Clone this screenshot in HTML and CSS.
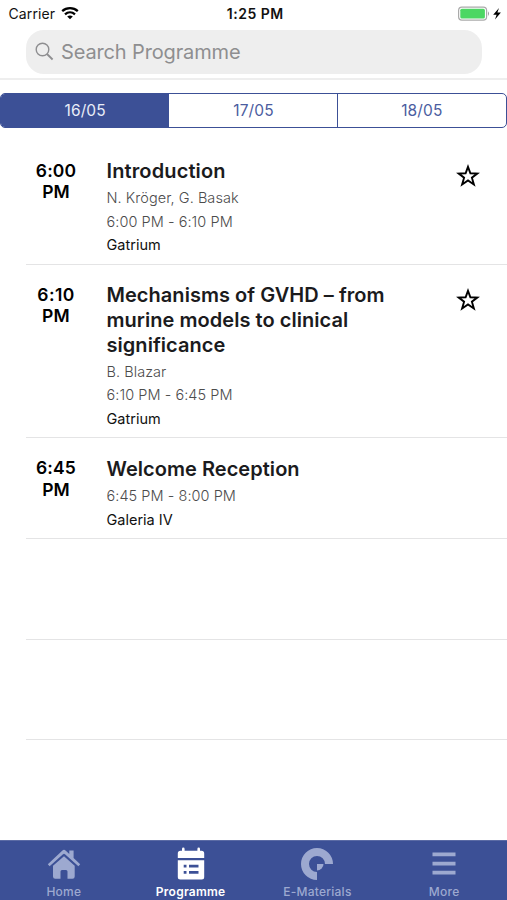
FILE: index.html
```html
<!DOCTYPE html>
<html lang="en">
<head>
<meta charset="utf-8">
<title>Programme</title>
<link rel="stylesheet" href="styles.css">
</head>
<body>
<div class="app">
  <header class="header">
    <div class="status">
      <div class="status-left"><span class="carrier">Carrier</span>
        <svg class="wifi" width="18" height="13" viewBox="0 0 18 13"><path d="M1.200 4.200C5.600.2 12.400.2 16.800 4.200M4 7.300C6.900 4.700 11.100 4.700 14 7.300" fill="none" stroke="#000" stroke-width="2.300"/><path d="M6.200 9.400Q9 7.400 11.800 9.400L9 12.200Z"/></svg>
      </div>
      <span class="clock">1:25 PM</span>
      <div class="status-right">
        <svg width="44" height="16" viewBox="0 0 44 16"><rect x=".6" y="1.100" width="28" height="13" rx="3.300" fill="#fff" stroke="#aaa" stroke-width="1.200"/><rect x="2.300" y="2.800" width="24.600" height="9.600" rx="1.500" fill="#4cd763"/><path d="M30 5.300q2 2.300 0 4.600z" fill="#999"/><path d="M41 2L35.200 8.700H38.600L37 13.400L42.900 6.600H39.400Z"/></svg>
      </div>
    </div>
    <div class="search">
      <svg width="19" height="19" viewBox="0 0 19 19" fill="none" stroke="#8e8e90" stroke-width="1.400"><circle cx="7.500" cy="7.500" r="6.300"/><path d="M12 12L17.600 17.500" stroke-width="1.800"/></svg>
      <span class="placeholder">Search Programme</span>
    </div>
  </header>
  <nav class="days">
    <span class="day active">16/05</span><span class="day">17/05</span><span class="day">18/05</span>
  </nav>
  <main class="list">
    <article class="row">
      <div class="time">6:00<br>PM</div>
      <div class="info">
        <h2 class="title intro">Introduction</h2>
        <p class="meta">N. Kröger, G. Basak</p>
        <p class="meta">6:00 PM - 6:10 PM</p>
        <p class="place">Gatrium</p>
      </div>
      <svg class="star" width="26" height="26" viewBox="0 0 26 26"><path d="M13 3.800L15.400 10.300L22.300 10.500L16.900 14.700L18.900 21.500L13 17.500L7.100 21.500L9.100 14.700L3.700 10.500L10.600 10.300Z"/></svg>
    </article>
    <article class="row">
      <div class="time narrow">6:10<br>PM</div>
      <div class="info">
        <h2 class="title">Mechanisms of GVHD – from<br>murine models to clinical<br>significance</h2>
        <p class="meta">B. Blazar</p>
        <p class="meta">6:10 PM - 6:45 PM</p>
        <p class="place">Gatrium</p>
      </div>
      <svg class="star" width="26" height="26" viewBox="0 0 26 26"><path d="M13 3.800L15.400 10.300L22.300 10.500L16.900 14.700L18.900 21.500L13 17.500L7.100 21.500L9.100 14.700L3.700 10.500L10.600 10.300Z"/></svg>
    </article>
    <article class="row">
      <div class="time">6:45<br>PM</div>
      <div class="info">
        <h2 class="title">Welcome Reception</h2>
        <p class="meta">6:45 PM - 8:00 PM</p>
        <p class="place">Galeria IV</p>
      </div>
    </article>
    <div class="row empty"></div>
    <div class="row empty"></div>
  </main>
  <nav class="tabs">
    <div class="tab">
      <svg width="34" height="34" viewBox="0 0 34 34" fill="currentColor"><path d="M2.600 19.200L.8 17.200L15.200 3.700Q17 2 18.800 3.700L22.300 7V3.500H26.600V11L33.200 17.200L31.400 19.200L18 7.200Q17 6.400 16 7.200Z"/><path d="M17 9.200L27.700 18.800V29.500Q27.700 31.800 25.500 31.800H20.500V24.600Q20.500 23 19 23H15Q13.500 23 13.500 24.600V31.800H8.200Q6 31.800 6 29.500V18.800Z"/></svg>
      <span>Home</span>
    </div>
    <div class="tab active">
      <svg width="34" height="34" viewBox="0 0 34 34" fill="currentColor"><path d="M3.800 11V6.500Q3.800 3.800 6.500 3.800H8V2Q8 .6 9.300 .6Q10.600 .6 10.600 2V3.800H23.400V2Q23.400 .6 24.700 .6Q26 .6 26 2V3.800H27.500Q30.200 3.800 30.200 6.500V11Z"/><path fill-rule="evenodd" d="M3.800 13.200H30.200V30Q30.200 32.500 27.700 32.500H6.300Q3.800 32.500 3.800 30ZM9.700 17.700V20.500H12.500V17.700ZM15 17.700V20.500H24.500V17.700ZM9.700 23.900V26.700H12.500V23.900ZM15 23.900V26.700H24.500V23.900Z"/></svg>
      <span>Programme</span>
    </div>
    <div class="tab">
      <svg width="34" height="34" viewBox="0 0 34 34" fill="currentColor"><path d="M33 17A16 16 0 1 0 17 33V25A8 8 0 1 1 25 17Z"/><path d="M17 17H23.500A6.500 6.500 0 0 1 17 23.500Z"/></svg>
      <span>E-Materials</span>
    </div>
    <div class="tab">
      <svg width="34" height="34" viewBox="0 0 34 34" fill="currentColor"><path d="M5.500 5.500H28.500V9.200H5.500ZM5.500 14.700H28.500V18.400H5.500ZM5.500 23.800H28.500V27.500H5.500Z"/></svg>
      <span>More</span>
    </div>
  </nav>
</div>
</body>
</html>
```
FILE: styles.css
```css
* { box-sizing: border-box; }
body { margin: 0; background: #fff; color: #111; font-family: Inter, "Liberation Sans", sans-serif; }
svg { display: block; flex: none; }
h2, p { margin: 0; }
.app { height: 900px; display: flex; flex-direction: column; overflow: hidden; }
.header { height: 80px; border-bottom: 2px solid #eee; flex: none; }
.status { height: 30px; padding: 0 5px 3px 8.500px; display: grid; grid-template-columns: 1fr auto 1fr; align-items: center; font-size: 14px; color: #111; }
.status-left { display: flex; align-items: center; gap: 6px; }
.carrier { letter-spacing: .12px; }
.clock { font-weight: 600; letter-spacing: .5px; }
.status-right { display: flex; justify-content: flex-end; }
.search { height: 43.5px; margin: 0 25px 0 25.5px; padding-left: 9px; border-radius: 18px; background: #eee; display: flex; align-items: center; gap: 7.500px; }
.placeholder { font-size: 20px; color: #8e8e90; letter-spacing: -.14px; }
.days { height: 35px; margin-top: 13px; flex: none; display: grid; grid-template-columns: repeat(3, 1fr); border: 1px solid #3c5096; border-radius: 5px; overflow: hidden; }
.day { display: flex; align-items: center; justify-content: center; font-size: 15.500px; letter-spacing: .1px; color: #4b5da0; }
.day + .day { border-left: 1px solid #3c5096; margin-left: -1px; }
.day.active { background: #3c5096; color: #e9edf8; }
.list { flex: 1; margin: 12.500px 0 0 25.500px; }
.row { display: flex; padding: 18.500px 26px 7px 0; border-bottom: 1px solid #e4e4e5; }
.time { width: 61px; margin-top: .5px; text-align: center; font-size: 17.500px; line-height: 21.300px; letter-spacing: .1px; font-weight: 600; color: #000; }
.narrow { letter-spacing: .4px; }
.info { flex: 1; margin-left: 20px; }
.title { font-size: 20px; line-height: 24.600px; font-weight: 600; letter-spacing: .04px; margin-bottom: 2.500px; color: #1b1b1d; white-space: nowrap; }
.intro { letter-spacing: .13px; }
.meta, .place { font-size: 14.500px; line-height: 23.600px; letter-spacing: .05px; color: #4c4c4c; font-weight: 300; }
.place { color: #111; font-weight: 400; letter-spacing: 0; }
.star { margin-top: 4px; fill: none; stroke: #000; stroke-width: 1.900; }
.empty { height: 100.400px; }
.tabs { height: 60.500px; flex: none; display: grid; grid-template-columns: repeat(4, 1fr); background: #3c5096; border-top: 1px solid #5b6ba5; }
.tab { display: flex; flex-direction: column; align-items: center; padding-top: 6px; color: #9da9d0; font-size: 12px; line-height: 14px; font-weight: 500; letter-spacing: .25px; }
.tab svg { margin-left: 1px; }
.tab span { margin: 4px 0 0 1px; }
.tab.active { color: #fff; font-weight: 600; }
```
